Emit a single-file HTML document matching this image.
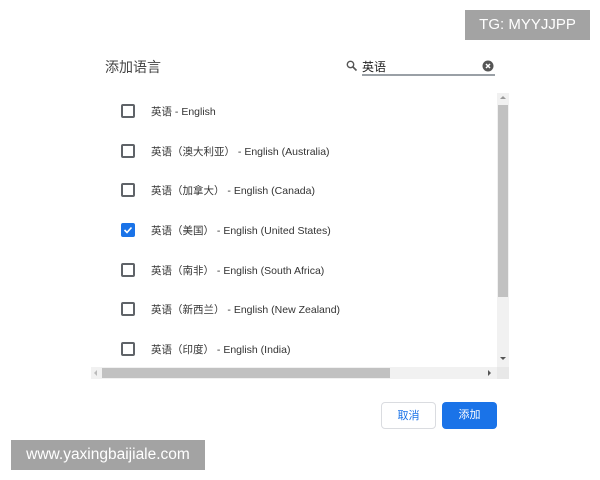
<!DOCTYPE html>
<html><head><meta charset="utf-8"><style>
*{margin:0;padding:0;box-sizing:border-box}
body{width:600px;height:480px;background:#fff;position:relative;overflow:hidden;font-family:"Liberation Sans","Noto Sans CJK SC",sans-serif;color:#333}
.a{position:absolute}
.title{left:105px;top:57px;font-size:14px;color:#444}
.cb{position:absolute;left:121px;width:14px;height:14px;border:2px solid #5f6368;border-radius:2px}
.lbl{position:absolute;left:151px;font-size:10.5px;color:#333;line-height:14px;margin-top:1px}
.btn{position:absolute;top:402px;width:55px;height:27px;border-radius:4px;font-size:11px;text-align:center;line-height:27px}
</style></head><body>
<div class="a title">添加语言</div>
<svg class="a" style="left:346px;top:60px" width="12" height="12" viewBox="0 0 12 12"><circle cx="4.5" cy="4.5" r="3.2" fill="none" stroke="#555" stroke-width="1.4"/><line x1="7" y1="7" x2="10.5" y2="10.5" stroke="#555" stroke-width="1.6"/></svg>
<div class="a" style="left:362px;top:58px;font-size:12px;color:#222">英语</div>
<div class="a" style="left:362px;top:74px;width:133px;height:2px;background:#9aa0a6"></div>
<svg class="a" style="left:482px;top:60px" width="12" height="12" viewBox="0 0 12 12"><circle cx="6" cy="6" r="5.5" fill="#555"/><path d="M4 4L8 8M8 4L4 8" stroke="#fff" stroke-width="1.5"/></svg>

<div class="cb" style="top:104px"></div><div class="lbl" style="top:104px">英语 - English</div>
<div class="cb" style="top:144px"></div><div class="lbl" style="top:144px">英语（澳大利亚） - English (Australia)</div>
<div class="cb" style="top:183px"></div><div class="lbl" style="top:183px">英语（加拿大） - English (Canada)</div>
<div class="cb" style="top:223px;background:#1a73e8;border-color:#1a73e8"><svg style="position:absolute;left:0;top:0" width="10" height="10" viewBox="0 0 10 10"><path d="M1.5 5L4 7.5L8.5 2.5" fill="none" stroke="#fff" stroke-width="1.6"/></svg></div><div class="lbl" style="top:223px">英语（美国） - English (United States)</div>
<div class="cb" style="top:263px"></div><div class="lbl" style="top:263px">英语（南非） - English (South Africa)</div>
<div class="cb" style="top:302px"></div><div class="lbl" style="top:302px">英语（新西兰） - English (New Zealand)</div>
<div class="cb" style="top:342px"></div><div class="lbl" style="top:342px">英语（印度） - English (India)</div>

<div class="a" style="left:497px;top:93px;width:12px;height:274px;background:#f1f1f1"></div>
<div class="a" style="left:498px;top:105px;width:10px;height:192px;background:#c1c1c1"></div>
<div class="a" style="left:500px;top:96px;width:0;height:0;border:3px solid transparent;border-bottom:3px solid #999;border-top:0"></div>
<div class="a" style="left:500px;top:357px;width:0;height:0;border:3px solid transparent;border-top:3px solid #555;border-bottom:0"></div>
<div class="a" style="left:91px;top:367px;width:406px;height:12px;background:#f1f1f1"></div>
<div class="a" style="left:102px;top:368px;width:288px;height:10px;background:#c1c1c1"></div>
<div class="a" style="left:497px;top:367px;width:12px;height:12px;background:#e8e8e8"></div>
<div class="a" style="left:94px;top:370px;border:3px solid transparent;border-right:3px solid #bbb;border-left:0"></div>
<div class="a" style="left:488px;top:370px;border:3px solid transparent;border-left:3px solid #555;border-right:0"></div>

<div class="btn" style="left:381px;border:1px solid #dadce0;color:#1a73e8;background:#fff">取消</div>
<div class="btn" style="left:442px;background:#1a73e8;color:#fff">添加</div>

<div class="a" style="left:465px;top:10px;width:125px;height:30px;background:#a3a3a3;color:#fff;font-size:15px;line-height:30px;text-align:center">TG: MYYJJPP</div>
<div class="a" style="left:11px;top:440px;width:194px;height:30px;background:#a3a3a3;color:#fff;font-size:15.5px;line-height:30px;text-align:center">www.yaxingbaijiale.com</div>
</body></html>
